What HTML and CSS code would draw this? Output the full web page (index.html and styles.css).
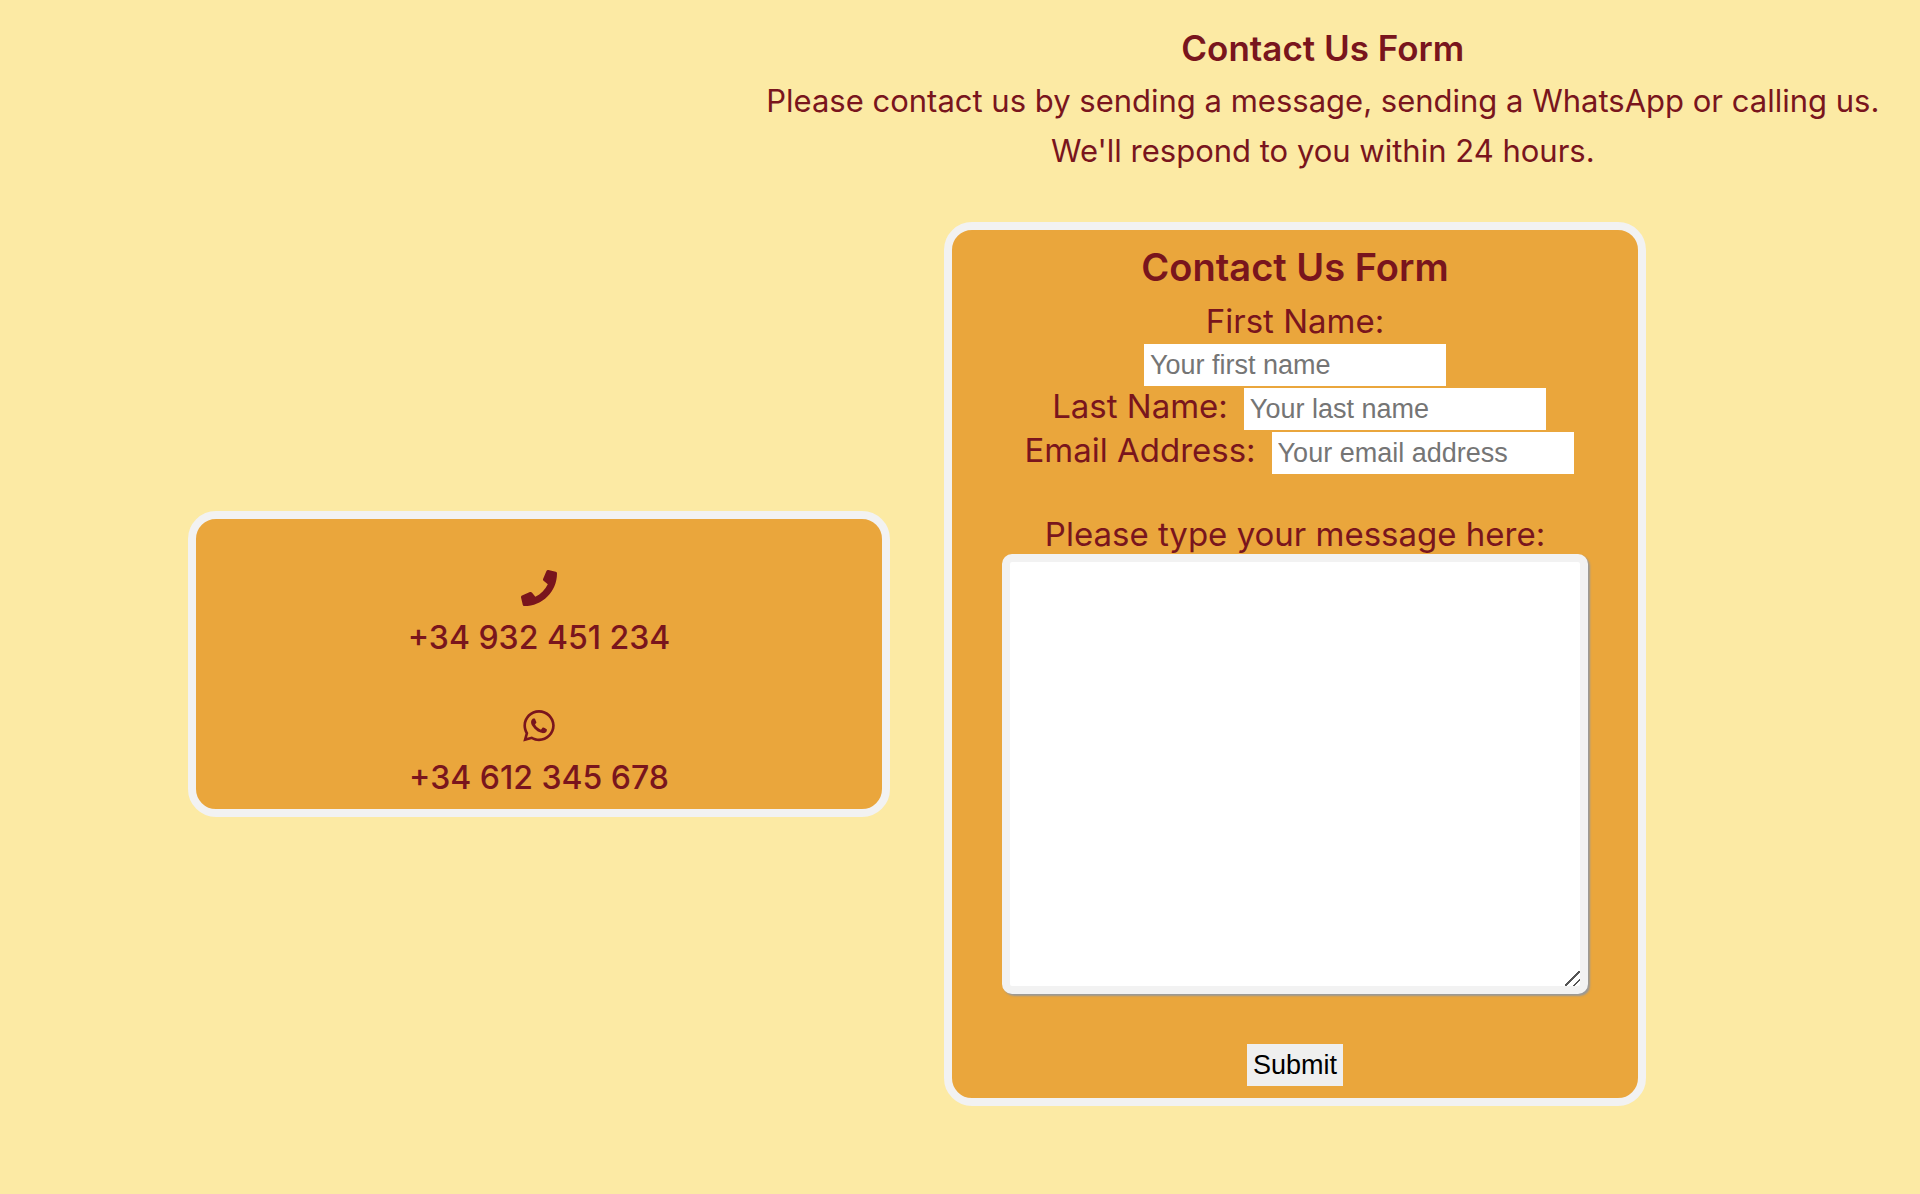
FILE: index.html
```html
<!DOCTYPE html>
<html lang="en">
<head>
<meta charset="utf-8">
<meta name="viewport" content="width=device-width, initial-scale=1">
<title>Contact Us Form</title>
<link rel="stylesheet" href="styles.css">
</head>
<body>
<header class="intro">
  <h1 class="intro-title">Contact Us Form</h1>
  <p class="intro-text">Please contact us by sending a message, sending a WhatsApp or calling us.</p>
  <p class="intro-text">We'll respond to you within 24 hours.</p>
</header>
<main class="contact">
  <section class="card phones">
    <div class="phone">
      <svg class="icon" viewBox="0 0 512 512" aria-hidden="true"><path d="M493.4 24.6l-104-24c-11.300-2.600-22.900 3.300-27.500 13.900l-48 112c-4.200 9.800-1.400 21.300 6.900 28l60.600 49.600c-36 76.700-98.900 140.500-177.200 177.200l-49.600-60.600c-6.800-8.300-18.200-11.100-28-6.900l-112 48C3.900 366.500-2 378.100.6 389.400l24 104C27.100 504.200 36.700 512 48 512c256.100 0 464-207.500 464-464 0-11.200-7.700-20.900-18.600-23.400z"/></svg>
      <span class="number">+34 932 451 234</span>
    </div>
    <div class="phone">
      <svg class="icon" viewBox="-32 32 512 512" aria-hidden="true"><path d="M380.900 97.100C339 55.100 283.200 32 223.900 32c-122.400 0-222 99.600-222 222 0 39.100 10.200 77.300 29.600 111L0 480l117.700-30.900c32.400 17.700 68.900 27 106.100 27h.1c122.300 0 224.100-99.600 224.100-222 0-59.300-25.200-115-67.100-157zm-157 341.600c-33.200 0-65.700-8.900-94-25.700l-6.700-4-69.800 18.300L72 359.200l-4.400-7c-18.500-29.400-28.200-63.300-28.200-98.200 0-101.700 82.800-184.500 184.600-184.500 49.300 0 95.600 19.200 130.400 54.100 34.800 34.900 56.200 81.200 56.100 130.500 0 101.800-84.900 184.600-186.600 184.600zm101.200-138.200c-5.500-2.800-32.800-16.200-37.900-18-5.100-1.900-8.800-2.800-12.500 2.800-3.700 5.600-14.300 18-17.600 21.800-3.200 3.700-6.500 4.200-12 1.400-32.600-16.300-54-29.100-75.500-66-5.700-9.800 5.700-9.100 16.300-30.300 1.800-3.700.9-6.900-.5-9.700-1.400-2.800-12.500-30.100-17.100-41.200-4.500-10.800-9.100-9.300-12.500-9.500-3.200-.2-6.900-.2-10.600-.2-3.700 0-9.700 1.400-14.800 6.900-5.100 5.600-19.400 19-19.400 46.300 0 27.300 19.900 53.700 22.600 57.400 2.800 3.700 39.100 59.700 94.800 83.800 35.200 15.200 49 16.500 66.600 13.900 10.700-1.600 32.800-13.400 37.400-26.400 4.600-13 4.600-24.100 3.200-26.400-1.300-2.500-5-3.900-10.500-6.600z"/></svg>
      <span class="number">+34 612 345 678</span>
    </div>
  </section>
  <form class="card form">
    <h2 class="form-title">Contact Us Form</h2>
    <div class="fields">
      <div class="field stacked">
        <label for="first-name">First Name:</label>
        <input class="text-input" id="first-name" type="text" placeholder="Your first name">
      </div>
      <div class="field inline">
        <label for="last-name">Last Name:</label>
        <input class="text-input" id="last-name" type="text" placeholder="Your last name">
      </div>
      <div class="field inline">
        <label for="email">Email Address:</label>
        <input class="text-input" id="email" type="email" placeholder="Your email address">
      </div>
    </div>
    <label class="message-label" for="message">Please type your message here:</label>
    <textarea class="message" id="message"></textarea>
    <button class="submit" type="submit">Submit</button>
  </form>
</main>
</body>
</html>
```

FILE: styles.css
```css
* {
  box-sizing: border-box;
}

body {
  margin: 0;
  background: #fceaa4;
  color: #79151d;
  font-family: Inter, "Liberation Sans", sans-serif;
}

h1,
h2,
p {
  margin: 0;
}

.intro {
  padding: 22px 4px 0 38%;
  text-align: center;
}

.intro-title {
  padding-bottom: 2px;
  font-size: 35px;
  font-weight: 600;
  line-height: 52px;
}

.intro-text {
  font-size: 31px;
  line-height: 50px;
}

.contact {
  display: grid;
  grid-template-columns: 1fr 1fr;
  align-items: center;
  gap: 54px;
  padding: 46px 274px 88px 188px;
}

.card {
  min-width: 0;
  display: flex;
  flex-direction: column;
  align-items: center;
  border: 8px solid #f2f2f2;
  border-radius: 28px;
  background: #eaa63c;
}

.phones {
  gap: 47px;
  padding: 51px 10px 6px;
}

.phone {
  display: flex;
  flex-direction: column;
  align-items: center;
  gap: 7px;
}

.icon {
  width: 36px;
  height: 36px;
  fill: currentColor;
}

.number {
  font-size: 32px;
  font-weight: 500;
  line-height: 50px;
}

.form {
  padding: 10px 50px 12px;
  font-size: 33px;
}

.form-title {
  padding-bottom: 2px;
  font-size: 38px;
  font-weight: 600;
  line-height: 54px;
}

.fields {
  display: flex;
  flex-direction: column;
  align-items: center;
  gap: 2px;
  margin-top: 8px;
  line-height: 34px;
}

.field {
  display: flex;
}

.inline {
  align-items: baseline;
  gap: 16px;
  padding-left: 8px;
}

.stacked {
  flex-direction: column;
  align-items: center;
  gap: 6px;
}

.text-input {
  width: 302px;
  height: 42px;
  padding: 2px 6px;
  border: 0;
  background: #fff;
  font-family: "Liberation Sans", Arial, sans-serif;
  font-size: 27px;
}

.text-input::placeholder {
  color: #757575;
}

.message-label {
  margin-top: 40px;
  line-height: 40px;
}

.message {
  width: 100%;
  height: 440px;
  border: 8px solid #f2f2f2;
  border-radius: 10px;
  background: #fff;
  box-shadow: 2px 2px 2px #999;
  font-family: inherit;
  font-size: 27px;
  resize: vertical;
}

.message::-webkit-resizer {
  background: linear-gradient(135deg, transparent 46%, #555 46%, #555 54%, transparent 54%, transparent 74%, #555 74%, #555 82%, transparent 82%);
}

.submit {
  height: 42px;
  margin-top: 50px;
  padding: 2px 6px;
  border: 0;
  background: #efefef;
  color: #000;
  font-family: "Liberation Sans", Arial, sans-serif;
  font-size: 27px;
}
```
